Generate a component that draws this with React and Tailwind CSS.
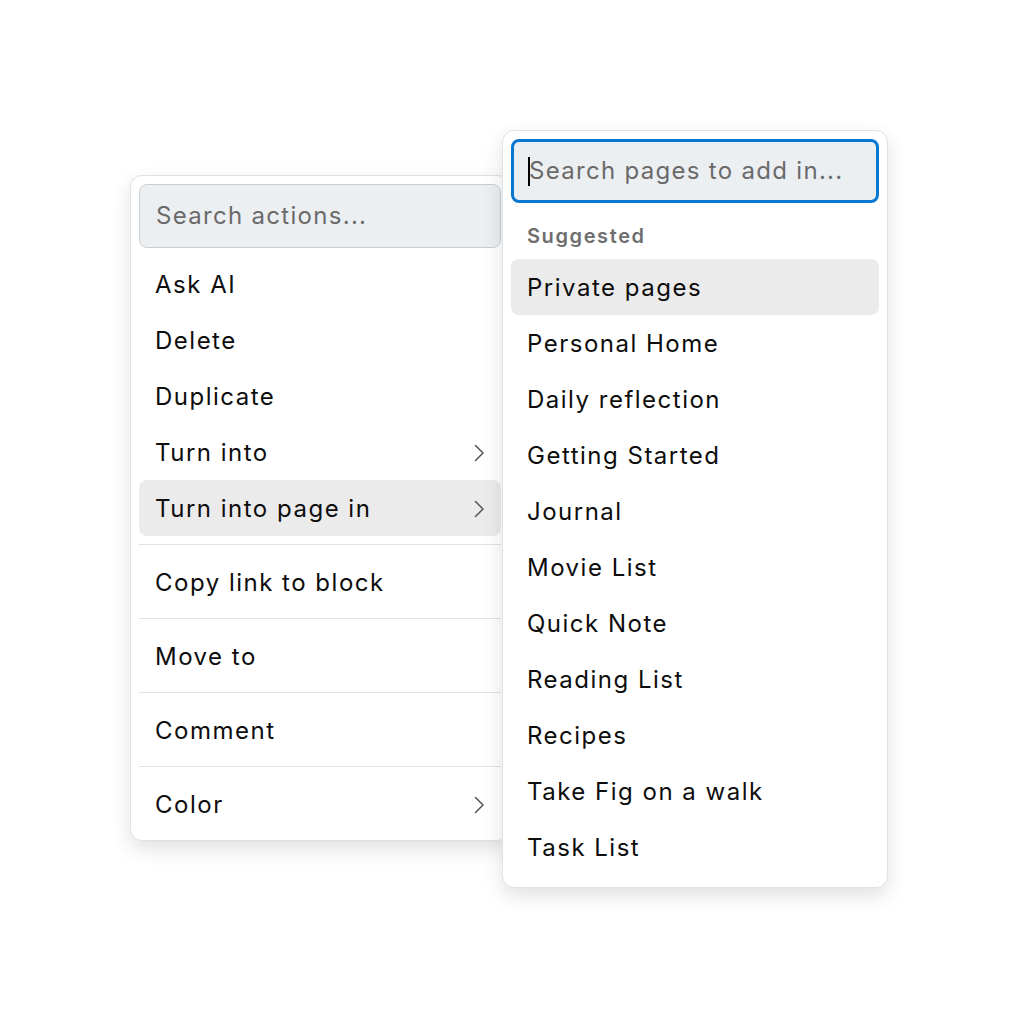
const actions = [
  [
    { label: "Ask AI" },
    { label: "Delete" },
    { label: "Duplicate" },
    { label: "Turn into", sub: true },
    { label: "Turn into page in", sub: true, active: true },
  ],
  [{ label: "Copy link to block" }],
  [{ label: "Move to" }],
  [{ label: "Comment" }],
  [{ label: "Color", sub: true }],
];

const pages = [
  "Private pages",
  "Personal Home",
  "Daily reflection",
  "Getting Started",
  "Journal",
  "Movie List",
  "Quick Note",
  "Reading List",
  "Recipes",
  "Take Fig on a walk",
  "Task List",
];

const Chevron = () => (
  <svg width="12" height="18" viewBox="0 0 12 18" fill="none" className="text-[#555]">
    <path d="M2.5 1.5 L10 9 L2.5 16.5" stroke="currentColor" strokeWidth="1.5" strokeLinecap="round" strokeLinejoin="round" />
  </svg>
);

const MenuRow = ({ label, sub, active }) => (
  <div
    className={`flex h-14 items-center justify-between rounded-lg px-4 pt-[2px] text-2xl tracking-[1.5px] text-[#0d0d0d] ${
      active ? "bg-[#ebebeb]" : ""
    }`}
  >
    <span>{label}</span>
    {sub && <Chevron />}
  </div>
);

export default function App() {
  return (
    <div
      className="min-h-[1016px] bg-white pl-[130px] pt-[130px]"
      style={{ fontFamily: "Inter, 'Noto Sans', sans-serif" }}
    >
      <div className="flex items-start">
        {/* Actions menu */}
        <div className="mt-[45px] w-[380px] rounded-xl border border-[#dde2e7] bg-white p-2 shadow-[0_8px_20px_rgba(0,0,0,0.12)]">
          <div className="mb-2 flex h-16 items-center rounded-lg border border-[#c9cdd1] bg-[#eceff2] px-4 text-2xl tracking-[1.3px] text-[#6a6a6a]">
            Search actions...
          </div>
          {actions.map((group, i) => (
            <div key={i}>
              {i > 0 && <div className="mb-[9px] mt-2 h-px bg-[#dde3e8]" />}
              {group.map((item) => (
                <MenuRow key={item.label} {...item} />
              ))}
            </div>
          ))}
        </div>

        {/* Page picker submenu */}
        <div className="relative z-10 -ml-2 w-[386px] rounded-xl border border-[#dde2e7] bg-white px-2 pb-3 pt-2 shadow-[0_8px_20px_rgba(0,0,0,0.12)]">
          <div className="flex h-16 items-center rounded-lg border-[3px] border-[#0a78d0] bg-[#eceff2] pl-[14px] text-2xl tracking-[1.3px] text-[#6a6a6a]">
            <span className="mr-[-1px] h-[29px] w-[2px] bg-black" />
            Search pages to add in...
          </div>
          <div className="mt-2 flex h-12 items-center px-4 pt-[2px] text-xl font-semibold tracking-[1.6px] text-[#6e6e6e]">
            Suggested
          </div>
          {pages.map((p, i) => (
            <MenuRow key={p} label={p} active={i === 0} />
          ))}
        </div>
      </div>
    </div>
  );
}
